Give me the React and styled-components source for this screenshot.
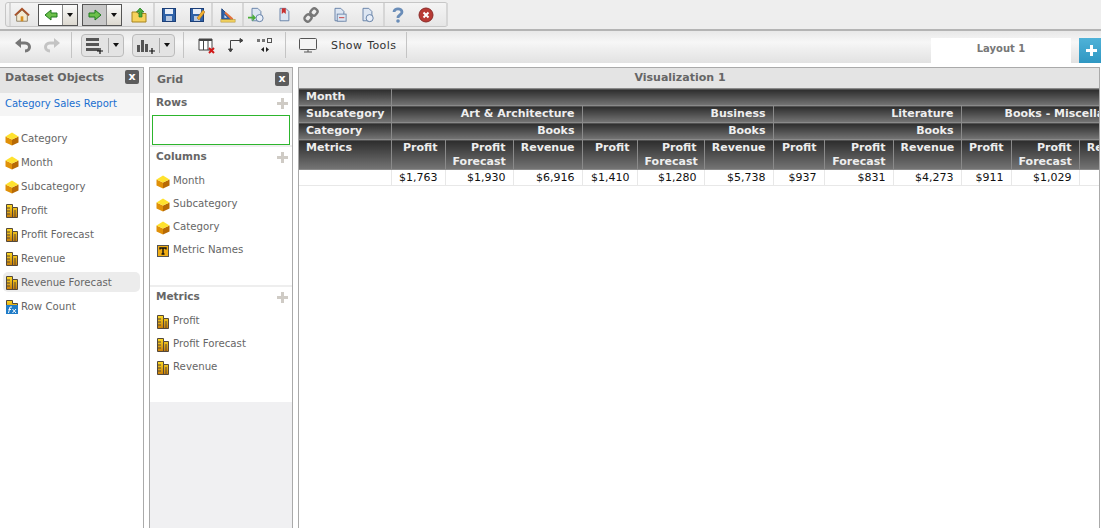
import styled, { createGlobalStyle } from 'styled-components';

const GlobalStyle = createGlobalStyle`
  html, body { margin: 0; padding: 0; background: #fff; }
  body { font-family: "DejaVu Sans", Verdana, sans-serif; font-size: 11px; color: #555; }
`;

const Page = styled.div`
  width: 1101px;
  height: 528px;
  overflow: hidden;
  display: flex;
  flex-direction: column;
`;

const TopBar = styled.div`
  height: 27px;
  flex: none;
  padding: 2px 0 0 5px;
  background: #eeeeee;
  border-bottom: 2px solid #b4b4b4;
`;

const TopGroup = styled.div`
  width: 443px;
  height: 25px;
  display: flex;
  align-items: center;
  box-sizing: border-box;
  border: 1px solid #c6c6c6;
  border-radius: 3px;
  background: linear-gradient(#f4f4f4, #e6e6e6);
`;

const TopSep = styled.div`
  width: 2px;
  height: 23px;
  flex: none;
  background: #d6d6d6;
  margin-left: ${(p) => p.$left || 0}px;
`;

const TopIcon = styled.div`
  width: 16px;
  height: 18px;
  flex: none;
  display: flex;
  align-items: center;
  justify-content: center;
  margin-left: ${(p) => p.$left || 0}px;
`;

const SplitBtn = styled.div`
  width: 40px;
  height: 22px;
  flex: none;
  margin-left: ${(p) => p.$left || 0}px;
  display: flex;
  box-sizing: border-box;
  border: 1px solid #555;
  background: ${(p) => (p.$active ? '#c8c8c8' : '#fff')};
`;

const SplitMain = styled.div`
  width: 23px;
  display: flex;
  align-items: center;
  justify-content: center;
`;

const SplitDrop = styled.div`
  flex: 1;
  display: flex;
  align-items: center;
  justify-content: center;
  border-left: 1px solid #888;
  background: linear-gradient(#fbfbfb, #ddd9d0);
`;

const Caret = styled.span`
  width: 0;
  height: 0;
  border-left: 3px solid transparent;
  border-right: 3px solid transparent;
  border-top: 4px solid #111;
`;

const SubBar = styled.div`
  height: 32px;
  flex: none;
  box-sizing: border-box;
  padding-bottom: 4px;
  display: flex;
  align-items: center;
  background: linear-gradient(#e8e8e8, #f7f7f7 35%, #eeeeee 60%, #e2e2e2);
  position: relative;
`;

const SubIcon = styled.div`
  display: flex;
  flex: none;
  margin-left: ${(p) => p.$left || 0}px;
`;

const SubSep = styled.div`
  width: 1px;
  height: 26px;
  flex: none;
  background: #c4c4c4;
  margin-left: ${(p) => p.$left || 0}px;
`;

const PillBtn = styled.div`
  width: 43px;
  height: 23px;
  flex: none;
  margin-left: ${(p) => p.$left || 0}px;
  box-sizing: border-box;
  display: flex;
  align-items: center;
  border: 1px solid #bbb;
  border-radius: 4px;
  background: #e3e3e3;
`;

const PillMain = styled.div`
  width: 26px;
  height: 15px;
  display: flex;
  align-items: center;
  justify-content: center;
  border-right: 1px solid #aaa;
`;

const PillDrop = styled.div`
  flex: 1;
  display: flex;
  justify-content: center;
`;

const ShowTools = styled.span`
  flex: none;
  margin-left: 13px;
  color: #333;
  font-size: 11px;
  letter-spacing: 0.4px;
  word-spacing: 1px;
`;

const Tab = styled.div`
  position: absolute;
  left: 931px;
  top: 7px;
  width: 140px;
  height: 25px;
  padding-bottom: 4px;
  box-sizing: border-box;
  background: #fff;
  display: flex;
  align-items: center;
  justify-content: center;
  font-weight: bold;
  font-size: 10px;
  color: #777;
`;

const AddTab = styled.div`
  position: absolute;
  left: 1079px;
  top: 7px;
  width: 22px;
  height: 25px;
  background: linear-gradient(#4fb2d8, #2f97c2);
  display: flex;
  align-items: center;
  padding-left: 7px;
  box-sizing: border-box;
`;

const Body = styled.div`
  flex: 1;
  min-height: 0;
  display: flex;
  padding-top: 4px;
`;

const Panel = styled.div`
  width: ${(p) => p.$w}px;
  margin-left: ${(p) => p.$left || 0}px;
  flex: none;
  box-sizing: border-box;
  border: 1px solid #aaaaaa;
  border-left-width: ${(p) => (p.$flushLeft ? 0 : 1)}px;
  border-bottom: 0;
  display: flex;
  flex-direction: column;
  background: ${(p) => p.$bg || '#fff'};
  overflow: hidden;
`;

const PanelHead = styled.div`
  height: 25px;
  flex: none;
  display: flex;
  align-items: center;
  justify-content: space-between;
  box-sizing: border-box;
  padding: 0 ${(p) => p.$right}px ${(p) => p.$lift}px ${(p) => p.$pad}px;
  background: #e4e4e4;
  font-weight: bold;
  font-size: 11px;
  color: #666;
`;

const CloseBox = styled.div`
  width: 14px;
  height: 14px;
  border-radius: 2px;
  background: #5c5c5c;
  color: #fff;
  font-size: 11px;
  font-weight: bold;
  line-height: 13px;
  text-align: center;
`;

const ReportName = styled.div`
  height: 23px;
  flex: none;
  padding-left: 5px;
  line-height: 21px;
  background: #f5f5f5;
  color: #1a6fd0;
  font-size: 10px;
`;

const ObjectList = styled.div`
  display: flex;
  flex-direction: column;
  padding: ${(p) => p.$top}px 3px 0;
`;

const ObjectRow = styled.div`
  height: ${(p) => p.$h - 4}px;
  margin: 2px 0;
  flex: none;
  display: flex;
  align-items: center;
  gap: ${(p) => p.$gap}px;
  padding-left: ${(p) => p.$pad}px;
  font-size: 10.2px;
  color: #666;
  background: ${(p) => (p.$selected ? '#ececec' : 'transparent')};
  border-radius: 5px;
`;

const IconSlot = styled.span`
  width: 14px;
  height: 14px;
  flex: none;
  display: flex;
  position: relative;
  top: 1px;
`;

const GridBody = styled.div`
  height: 309px;
  flex: none;
  background: #fff;
  display: flex;
  flex-direction: column;
`;

const SectionHead = styled.div`
  height: 20px;
  flex: none;
  display: flex;
  align-items: center;
  justify-content: space-between;
  padding: 0 4px 2px 6px;
  box-sizing: border-box;
  font-weight: bold;
  font-size: 10.5px;
  color: #666;
`;

const PlusMark = styled.span`
  width: 11px;
  height: 11px;
  position: relative;
  top: 1px;
  &::before, &::after {
    content: '';
    position: absolute;
    background: #cfcbc5;
  }
  &::before { left: 4px; top: 0; width: 3px; height: 11px; }
  &::after { left: 0; top: 4px; width: 11px; height: 3px; }
`;

const DropBox = styled.div`
  height: 30px;
  flex: none;
  margin: 2px 2px 0;
  box-sizing: border-box;
  border: 1px solid #2db52d;
`;

const Divider = styled.div`
  height: 2px;
  flex: none;
  margin-top: ${(p) => p.$top || 0}px;
  background: #eeeeee;
`;

const VizTitle = styled.div`
  height: 20px;
  flex: none;
  background: #e4e4e4;
  text-align: center;
  font-weight: bold;
  font-size: 11px;
  line-height: 20px;
  color: #666;
  padding-right: 38px;
`;

const Table = styled.table`
  flex: none;
  align-self: flex-start;
  border-collapse: collapse;
  table-layout: fixed;
  width: 849px;
  font-size: 11px;
`;

const Head = styled.td`
  height: ${(p) => p.$h || 16}px;
  padding: ${(p) => (p.$two ? '1px' : '0')} 7px 0 ${(p) => p.$indent || 7}px;
  box-sizing: border-box;
  vertical-align: ${(p) => (p.$two ? 'top' : 'middle')};
  text-align: ${(p) => (p.$label || p.$indent ? 'left' : 'right')};
  font-weight: bold;
  line-height: 14px;
  white-space: ${(p) => (p.$two ? 'normal' : 'nowrap')};
  overflow: hidden;
  color: #eeeeee;
  background: linear-gradient(#2c2c2c, #757575);
  border: 1px solid #8a8a8a;
  &:first-child { border-left: 0; }
`;

const Cell = styled.td`
  height: 16px;
  padding: 0 7px;
  box-sizing: border-box;
  text-align: right;
  color: #111;
  font-size: 11px;
  line-height: 15px;
  white-space: nowrap;
  border: 1px solid #e8e8e8;
  border-top: 0;
  &:first-child { border-left: 0; }
`;

const Cube = () => (
  <svg width="14" height="14" viewBox="0 0 14 14">
    <path d="M0.500 4.500 7 7.500V13.500L0.500 10.500Z" fill="#e09008" />
    <path d="M13.500 4.500 7 7.500V13.500L13.500 10.500Z" fill="#b86a04" />
    <path d="M7 0.500 13.500 4.500 7 7.500 0.500 4.500Z" fill="#ffe22e" />
  </svg>
);

const Metric = () => (
  <svg width="14" height="14" viewBox="0 0 14 14">
    <defs>
      <linearGradient id="gold" x1="0" y1="0" x2="0" y2="1">
        <stop offset="0" stopColor="#ffdc24" />
        <stop offset="1" stopColor="#c97c06" />
      </linearGradient>
    </defs>
    <path d="M1.500 0.500H7.500V3.500H12.500V13.500H1.500Z" fill="url(#gold)" stroke="#54483a" />
    <path d="M2 4H5M2 7H5M2 10H5M7.500 3.500V14M10 6V14" stroke="#54483a" fill="none" />
  </svg>
);

const Formula = () => (
  <svg width="14" height="14" viewBox="0 0 14 14">
    <path d="M1.500 0.500H7.500V3.500H12.500V10H1.500Z" fill="url(#gold)" stroke="#54483a" />
    <rect x="1" y="5" width="12" height="9" fill="#1f7cc8" />
    <path d="M3.500 13 5 7H7M3.500 9.500H6M7.500 9 11 13M11 9 7.500 13" stroke="#fff" fill="none" />
  </svg>
);

const TextIcon = () => (
  <svg width="14" height="14" viewBox="0 0 14 14">
    <rect x="1.500" y="1.500" width="11" height="11" fill="#f0ad14" stroke="#555" />
    <path d="M4 5.500V4H10V5.500M7 4V10M5.500 10H8.500" stroke="#111" strokeWidth="1.400" fill="none" />
  </svg>
);

const Home = () => (
  <svg width="18" height="18" viewBox="0 0 18 18">
    <path d="M3 9V16H15V9L9 3.500Z" fill="#f4ead2" stroke="#8a7a60" />
    <path d="M1 9.500 9 2 17 9.500" fill="none" stroke="#a8522a" strokeWidth="2" />
    <rect x="7.500" y="10.500" width="3" height="5.500" fill="#d89020" />
  </svg>
);

const ArrowLeft = () => (
  <svg width="14" height="12" viewBox="0 0 14 12">
    <path d="M1 6 7 1V4H13V8H7V11Z" fill="#6cc04a" stroke="#1f7a1f" />
  </svg>
);

const ArrowRight = () => (
  <svg width="14" height="12" viewBox="0 0 14 12">
    <path d="M13 6 7 1V4H1V8H7V11Z" fill="#6cc04a" stroke="#1f7a1f" />
  </svg>
);

const UpFolder = () => (
  <svg width="16" height="16" viewBox="0 0 16 16">
    <path d="M1 5H6L7 6.500H15V15H1Z" fill="#f6d25c" stroke="#a68420" />
    <path d="M9 1 13 5H11V10H8V5H5.500Z" fill="#4cae3a" stroke="#217a1e" strokeWidth="0.700" />
  </svg>
);

const Save = ({ pencil }) => (
  <svg width="16" height="16" viewBox="0 0 16 16">
    <rect x="1.500" y="1.500" width="13" height="13" fill="#2f62a8" stroke="#1c3f78" />
    <rect x="4" y="2" width="8" height="5" fill="#e8eef8" />
    <rect x="5" y="9" width="6" height="5" fill="#b8c8e0" />
    {pencil && <path d="M8 11 14 3 16 5 10 13Z" fill="#f0b030" stroke="#a06010" strokeWidth="0.500" />}
  </svg>
);

const Design = () => (
  <svg width="18" height="18" viewBox="0 0 18 18">
    <path d="M2 2V14H14Z" fill="#2f62a8" stroke="#1c3f78" />
    <path d="M5 9V12H8Z" fill="#e8eef8" />
    <path d="M6 5 15 13 13 15 5 7Z" fill="#e2703a" />
    <rect x="1" y="14" width="16" height="3" fill="#f0d060" stroke="#a68420" strokeWidth="0.500" />
  </svg>
);

const Doc = ({ children }) => (
  <svg width="18" height="18" viewBox="0 0 18 18">
    <path d="M4.500 1.500H11L14.500 5V15.500H4.500Z" fill="#dde6f2" stroke="#5f7ba2" />
    {children}
  </svg>
);

const Link = () => (
  <svg width="16" height="16" viewBox="0 0 16 16" fill="none" stroke="#777" strokeWidth="2.400">
    <rect x="8" y="1.500" width="6" height="7" rx="2.500" transform="rotate(40 11 5)" />
    <rect x="2" y="7.500" width="6" height="7" rx="2.500" transform="rotate(40 5 11)" />
  </svg>
);

const Help = () => (
  <svg width="12" height="16" viewBox="0 0 12 16" fill="none">
    <path d="M2 5C2 0.800 10 0.800 10 5 10 8 6 7.500 6 11" stroke="#6a8db8" strokeWidth="2.800" />
    <circle cx="6" cy="14" r="1.800" fill="#6a8db8" />
  </svg>
);

const Stop = () => (
  <svg width="16" height="16" viewBox="0 0 16 16">
    <circle cx="8" cy="8" r="7" fill="#b83a34" stroke="#8a2a28" />
    <path d="M5.500 5.500 10.500 10.500M10.500 5.500 5.500 10.500" stroke="#fff" strokeWidth="2" />
  </svg>
);

const Undo = ({ color }) => (
  <svg width="18" height="16" viewBox="0 0 18 16" fill="none">
    <path d="M5 6H11C17 6 17 14 11 14" stroke={color} strokeWidth="3" />
    <path d="M1 6 7 1V11Z" fill={color} />
  </svg>
);

const Redo = ({ color }) => (
  <svg width="18" height="16" viewBox="0 0 18 16" fill="none">
    <path d="M13 6H7C1 6 1 14 7 14" stroke={color} strokeWidth="3" />
    <path d="M17 6 11 1V11Z" fill={color} />
  </svg>
);

const RowsAdd = () => (
  <svg width="20" height="17" viewBox="0 0 20 17">
    <path d="M1 1H14V4H1ZM1 6H14V9H1ZM1 11H14V14H1Z" fill="#555" />
    <path d="M12 14H18M15 11V17" stroke="#111" strokeWidth="1.200" />
  </svg>
);

const BarsAdd = () => (
  <svg width="20" height="17" viewBox="0 0 20 17">
    <path d="M1 8H4V15H1ZM5 3H8V15H5ZM9 7H12V15H9Z" fill="#555" />
    <path d="M13 14H19M16 11V17" stroke="#111" strokeWidth="1.200" />
  </svg>
);

const GridRemove = () => (
  <svg width="18" height="17" viewBox="0 0 18 17">
    <path d="M1 2H14V13H1Z" fill="#fff" stroke="#444" />
    <path d="M1 2H14V4H1Z" fill="#444" />
    <path d="M5.500 4V13M10 4V13" stroke="#444" />
    <path d="M11 11 16 16M16 11 11 16" stroke="#d01818" strokeWidth="2" />
  </svg>
);

const Swap = () => (
  <svg width="17" height="17" viewBox="0 0 17 17" fill="none" stroke="#444">
    <path d="M2.500 14V3.500H13" />
    <path d="M0.500 12H4.500L2.500 15ZM12 1.500V5.500L15 3.500Z" fill="#444" />
  </svg>
);

const Pivot = () => (
  <svg width="19" height="17" viewBox="0 0 19 17">
    <path d="M1 2H4V5H1ZM6 2H9V5H6Z" fill="#777" />
    <rect x="11.500" y="1.500" width="4" height="4" fill="none" stroke="#555" />
    <path d="M8 10V15L5 12.500ZM10 10V15L13 12.500Z" fill="#222" />
  </svg>
);

const Monitor = () => (
  <svg width="20" height="17" viewBox="0 0 20 17">
    <rect x="1.500" y="1.500" width="17" height="11" rx="1" fill="#f4f4f4" stroke="#555" />
    <path d="M6 15H14M10 13V15" stroke="#555" />
  </svg>
);

const datasetItems = [
  ['Category', Cube],
  ['Month', Cube],
  ['Subcategory', Cube],
  ['Profit', Metric],
  ['Profit Forecast', Metric],
  ['Revenue', Metric],
  ['Revenue Forecast', Metric],
  ['Row Count', Formula],
];

const columnItems = [
  ['Month', Cube],
  ['Subcategory', Cube],
  ['Category', Cube],
  ['Metric Names', TextIcon],
];

const metricItems = [
  ['Profit', Metric],
  ['Profit Forecast', Metric],
  ['Revenue', Metric],
];

const colWidths = [92, 54, 68, 69, 55, 67, 69, 51, 69, 68, 50, 68, 69];

const groups = [
  { name: 'Art & Architecture', cat: 'Books' },
  { name: 'Business', cat: 'Books' },
  { name: 'Literature', cat: 'Books' },
];

const values = ['$1,763', '$1,930', '$6,916', '$1,410', '$1,280', '$5,738', '$937', '$831', '$4,273', '$911', '$1,029', ''];

function ItemRows({ items, h, pad, gap }) {
  return items.map(([label, Icon]) => (
    <ObjectRow key={label} $h={h} $pad={pad} $gap={gap} $selected={label === 'Revenue Forecast'}>
      <IconSlot><Icon /></IconSlot>
      {label}
    </ObjectRow>
  ));
}

export default function App() {
  return (
    <Page>
      <GlobalStyle />
      <TopBar>
        <TopGroup>
          <TopSep $left={3} />
          <TopIcon $left={3}><Home /></TopIcon>
          <SplitBtn $left={8}>
            <SplitMain><ArrowLeft /></SplitMain>
            <SplitDrop><Caret /></SplitDrop>
          </SplitBtn>
          <SplitBtn $left={4} $active>
            <SplitMain><ArrowRight /></SplitMain>
            <SplitDrop><Caret /></SplitDrop>
          </SplitBtn>
          <TopIcon $left={9}><UpFolder /></TopIcon>
          <TopSep $left={6} />
          <TopIcon $left={6}><Save /></TopIcon>
          <TopIcon $left={12}><Save pencil /></TopIcon>
          <TopSep $left={6} />
          <TopIcon $left={7}><Design /></TopIcon>
          <TopSep $left={6} />
          <TopIcon $left={4}>
            <Doc>
              <circle cx="13" cy="12.500" r="4" fill="#e8eef8" stroke="#5a78a0" />
              <path d="M0 11H5V8L9 12 5 16V13H0Z" fill="#4cae3a" />
            </Doc>
          </TopIcon>
          <TopIcon $left={12}>
            <Doc><path d="M6.500 1.500H11V8L8.700 6 6.500 8Z" fill="#c83030" /></Doc>
          </TopIcon>
          <TopIcon $left={11}><Link /></TopIcon>
          <TopIcon $left={12}>
            <Doc>
              <rect x="7" y="8" width="10" height="8" fill="#dce6f2" stroke="#6c84a8" />
              <path d="M9 12H15" stroke="#c83030" />
            </Doc>
          </TopIcon>
          <TopIcon $left={12}>
            <Doc><circle cx="12" cy="12.500" r="4" fill="#e8eef8" stroke="#5a78a0" /></Doc>
          </TopIcon>
          <TopSep $left={8} />
          <TopIcon $left={5}><Help /></TopIcon>
          <TopIcon $left={12}><Stop /></TopIcon>
          <TopSep $left={12} />
        </TopGroup>
      </TopBar>

      <SubBar>
        <SubIcon $left={14}><Undo color="#777" /></SubIcon>
        <SubIcon $left={11}><Redo color="#c4c4c4" /></SubIcon>
        <SubSep $left={10} />
        <PillBtn $left={9}>
          <PillMain><RowsAdd /></PillMain>
          <PillDrop><Caret /></PillDrop>
        </PillBtn>
        <PillBtn $left={8}>
          <PillMain><BarsAdd /></PillMain>
          <PillDrop><Caret /></PillDrop>
        </PillBtn>
        <SubSep $left={8} />
        <SubIcon $left={14}><GridRemove /></SubIcon>
        <SubIcon $left={12}><Swap /></SubIcon>
        <SubIcon $left={11}><Pivot /></SubIcon>
        <SubSep $left={10} />
        <SubIcon $left={12}><Monitor /></SubIcon>
        <ShowTools>Show Tools</ShowTools>
        <SubSep $left={10} />
        <Tab>Layout 1</Tab>
        <AddTab>
          <svg width="11" height="11" viewBox="0 0 11 11">
            <path d="M4 0H7V4H11V7H7V11H4V7H0V4H4Z" fill="#fff" />
          </svg>
        </AddTab>
      </SubBar>

      <Body>
        <Panel $w={144} $flushLeft>
          <PanelHead $pad={5} $right={4} $lift={7}>
            Dataset Objects
            <CloseBox>x</CloseBox>
          </PanelHead>
          <ReportName>Category Sales Report</ReportName>
          <ObjectList $top={10}>
            <ItemRows items={datasetItems} h={24} pad={2} gap={2} />
          </ObjectList>
        </Panel>

        <Panel $w={144} $left={5} $bg="#f0f0f2">
          <PanelHead $pad={7} $right={3} $lift={3}>
            Grid
            <CloseBox>x</CloseBox>
          </PanelHead>
          <GridBody>
            <SectionHead>Rows<PlusMark /></SectionHead>
            <DropBox />
            <Divider />
            <SectionHead>Columns<PlusMark /></SectionHead>
            <ObjectList $top={2}>
              <ItemRows items={columnItems} h={23} pad={3} gap={3} />
            </ObjectList>
            <Divider $top={24} />
            <SectionHead>Metrics<PlusMark /></SectionHead>
            <ObjectList $top={2}>
              <ItemRows items={metricItems} h={23} pad={3} gap={3} />
            </ObjectList>
          </GridBody>
        </Panel>

        <Panel $w={802} $left={5}>
          <VizTitle>Visualization 1</VizTitle>
          <Table>
            <colgroup>
              {colWidths.map((w, i) => <col key={i} width={w} />)}
            </colgroup>
            <tbody>
              <tr>
                <Head $label $h={17}>Month</Head>
                <Head colSpan={12} />
              </tr>
              <tr>
                <Head $label $h={17}>Subcategory</Head>
                {groups.map((g) => <Head key={g.name} colSpan={3}>{g.name}</Head>)}
                <Head colSpan={3} $indent={43}>Books - Miscellaneous</Head>
              </tr>
              <tr>
                <Head $label $h={17}>Category</Head>
                {groups.map((g) => <Head key={g.name} colSpan={3}>{g.cat}</Head>)}
                <Head colSpan={3} />
              </tr>
              <tr>
                <Head $label $two $h={30}>Metrics</Head>
                {[0, 1, 2, 3].flatMap((n) => [
                  <Head key={`p${n}`} $two $h={30}>Profit</Head>,
                  <Head key={`f${n}`} $two $h={30}>Profit Forecast</Head>,
                  <Head key={`r${n}`} $two $h={30}>Revenue</Head>,
                ])}
              </tr>
              <tr>
                <Cell />
                {values.map((v, i) => <Cell key={i}>{v}</Cell>)}
              </tr>
            </tbody>
          </Table>
        </Panel>
      </Body>
    </Page>
  );
}
